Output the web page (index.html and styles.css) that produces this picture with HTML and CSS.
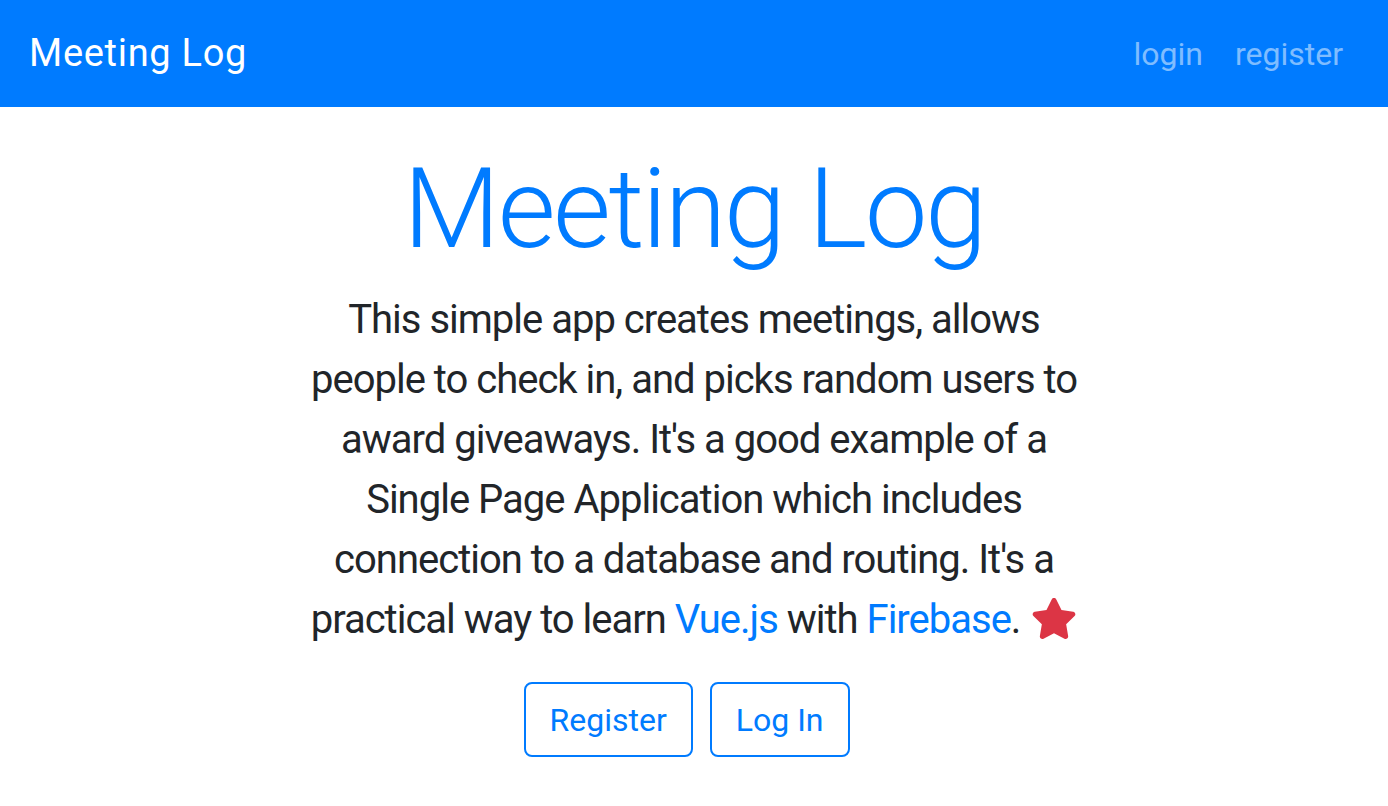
FILE: index.html
```html
<!DOCTYPE html>
<html lang="en">
<head>
<meta charset="utf-8">
<title>Meeting Log</title>
<link rel="stylesheet" href="styles.css">
</head>
<body>
<nav class="navbar">
  <a class="brand" href="#">Meeting Log</a>
  <div class="nav-links">
    <a class="nav-link" href="#">login</a>
    <a class="nav-link" href="#">register</a>
  </div>
</nav>
<main class="hero">
  <h1 class="title">Meeting Log</h1>
  <p class="lead">This simple app creates meetings, allows<br>
  people to check in, and picks random users to<br>
  award giveaways. It's a good example of a<br>
  Single Page Application which includes<br>
  connection to a database and routing. It's a<br>
  practical way to learn <a href="#">Vue.js</a> with <a href="#">Firebase</a>. <svg class="star" viewBox="0 0 576 512" aria-hidden="true"><path d="M259.3 17.8L194 150.2 47.9 171.5c-26.2 3.8-36.7 36.1-17.7 54.6l105.7 103-25 145.5c-4.5 26.3 23.2 46 46.4 33.7L288 439.6l130.7 68.7c23.2 12.2 50.9-7.4 46.4-33.7l-25-145.5 105.7-103c19-18.5 8.5-50.8-17.7-54.6L382 150.2 316.7 17.8c-11.7-23.6-45.6-23.9-57.4 0z"/></svg></p>
  <div class="actions">
    <a class="btn" href="#">Register</a>
    <a class="btn" href="#">Log In</a>
  </div>
</main>
</body>
</html>
```
FILE: styles.css
```css
* { box-sizing: border-box; }
html, body { margin: 0; padding: 0; }
body {
  font-family: Roboto, "Noto Sans", sans-serif;
  color: #212529;
  background: #fff;
}
a { text-decoration: none; }

.navbar {
  display: flex;
  align-items: center;
  justify-content: space-between;
  height: 107px;
  padding: 0 29px 0 29px;
  background: #007bff;
}
.brand {
  color: #fff;
  font-size: 38px;
  line-height: 1.5;
  letter-spacing: 0.7px;
}
.nav-links { display: flex; }
.nav-link {
  color: rgba(255, 255, 255, 0.5);
  font-size: 32px;
  line-height: 1.5;
  padding: 0 16px;
}

.hero {
  text-align: center;
  padding-top: 35px;
}
.title {
  margin: 0 0 14px;
  font-size: 112px;
  font-weight: 300;
  line-height: 1.2;
  color: #007bff;
  letter-spacing: -2.5px;
}
.lead {
  margin: 0 0 32px;
  font-size: 40px;
  line-height: 60px;
  letter-spacing: -1px;
}
.lead a { color: #007bff; }
.star {
  width: 46px;
  height: 41px;
  margin-left: 2px;
  fill: #dc3545;
  vertical-align: -6px;
}
.actions {
  display: flex;
  justify-content: center;
  gap: 17px;
  padding-right: 15px;
}
.btn {
  display: inline-block;
  height: 75px;
  padding: 0 24px;
  border: 2px solid #007bff;
  border-radius: 8px;
  color: #007bff;
  font-size: 32px;
  line-height: 72px;
}
```
